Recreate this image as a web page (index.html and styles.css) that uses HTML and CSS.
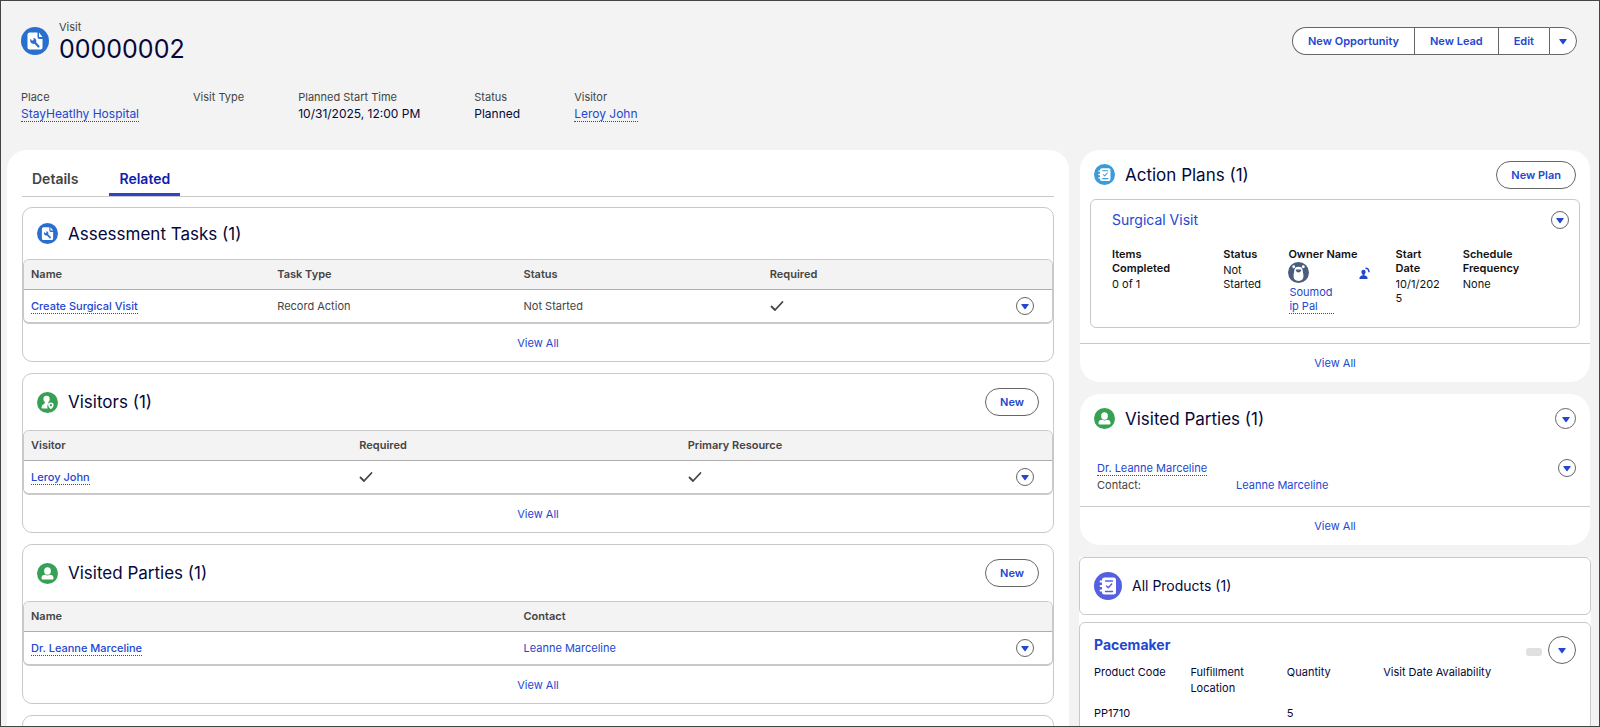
FILE: index.html
```html
<!DOCTYPE html>
<html lang="en">

<head>
    <meta charset="utf-8">
    <title>Visit 00000002</title>
    <link rel="stylesheet" href="styles.css">
</head>

<body>
    <svg class="sprite" aria-hidden="true">
        <symbol id="icon-task" viewBox="0 0 28 28">
            <path fill="#fff" d="M9 5.500h7.500V10q0 2 2 2H21.500v8.500q0 2-2 2h-11q-2 0-2-2v-13q0-2 2.500-2zM18 5.500l3.500 4.500h-3q-.5 0-.5-.5z" />
            <path fill="none" stroke="#2a6fd0" stroke-width="2.200" stroke-linecap="round" d="M13.500 15l4 4.500" />
            <path fill="#2a6fd0" d="M9.500 11.500l1.500 2.300 1.700-.8-.4-2q2.900.2 3 2.800-.1 2.800-2.700 3.100-3-.2-3.400-2.800z" />
        </symbol>
        <symbol id="icon-plan" viewBox="0 0 28 28">
            <rect x="8" y="5.500" width="14" height="17" rx="2.500" fill="#fff" />
            <path stroke="#fff" stroke-width="1.800" stroke-linecap="round" d="M6.500 9.500h2M6.500 14h2M6.500 18.500h2" />
            <path fill="none" stroke="currentColor" stroke-width="1.400" stroke-linecap="round" stroke-linejoin="round" d="M11.500 9h7M11.500 19.500h7M12.500 14l1.800 1.800 3.400-3.800" />
        </symbol>
        <symbol id="icon-person" viewBox="0 0 28 28">
            <ellipse cx="14" cy="10.500" rx="4.500" ry="5" fill="#fff" />
            <path fill="#fff" d="M6 20.500v-.5q0-4.500 5.200-4.500Q14 17.500 16.800 15.500 22 15.500 22 20v.5q0 1.500-1.500 1.500h-13Q6 22 6 20.500z" />
        </symbol>
        <symbol id="icon-visitor" viewBox="0 0 28 28">
            <path fill="#fff" d="M12.500 5q4.500 0 4.500 4.500 0 2-1.500 3.500-.7 1 0 2-1.800 2-1.800 4.500 0 1.500.7 2.500H7.500Q6 22 6 20.500q0-3 3-4.500 2.500-.8 1.200-3Q8.500 11.500 8.500 9.500 8.500 5 12.500 5z" />
            <path fill="#fff" fill-rule="evenodd" d="M18.500 14q3.700 0 3.700 3.500 0 2.300-3.700 5.500-3.700-3.200-3.700-5.500 0-3.500 3.700-3.500zm0 2a1.500 1.500 0 1 0 .01 0z" />
        </symbol>
        <symbol id="icon-check" viewBox="0 0 14 12">
            <path fill="none" stroke="#444" stroke-width="1.800" stroke-linecap="round" stroke-linejoin="round" d="M1.500 6.500l3.500 3.500 7.500-8" />
        </symbol>
        <symbol id="icon-down" viewBox="0 0 8 6">
            <path d="M.8 0h6.400q.9 0 .4.700L4.500 5q-.5.500-1 0L.4.700Q-.1 0 .8 0z" fill="#2347d0" />
        </symbol>
    </svg>

    <div class="page">
        <header class="record-header">
            <div class="record-top">
                <span class="icon icon-large blue"><svg><use href="#icon-task" /></svg></span>
                <div class="record-name">
                    <p class="record-type">Visit</p>
                    <h1>00000002</h1>
                </div>
                <div class="button-group">
                    <button type="button">New Opportunity</button>
                    <button type="button">New Lead</button>
                    <button type="button">Edit</button>
                    <button type="button" class="more" aria-label="More actions"><svg class="caret"><use href="#icon-down" /></svg></button>
                </div>
            </div>
            <dl class="record-fields">
                <div>
                    <dt>Place</dt>
                    <dd><a href="#" class="dotted">StayHeatlhy Hospital</a></dd>
                </div>
                <div>
                    <dt>Visit Type</dt>
                    <dd></dd>
                </div>
                <div>
                    <dt>Planned Start Time</dt>
                    <dd>10/31/2025, 12:00 PM</dd>
                </div>
                <div>
                    <dt>Status</dt>
                    <dd>Planned</dd>
                </div>
                <div>
                    <dt>Visitor</dt>
                    <dd><a href="#" class="dotted">Leroy John</a></dd>
                </div>
            </dl>
        </header>

        <div class="columns">
            <main class="main-panel">
                <nav class="tabs">
                    <a href="#">Details</a>
                    <a href="#" class="active">Related</a>
                </nav>

                <section class="related-list">
                    <div class="list-header short">
                        <span class="icon blue"><svg><use href="#icon-task" /></svg></span>
                        <h2>Assessment Tasks (1)</h2>
                    </div>
                    <div class="table-wrap">
                        <table>
                            <thead>
                                <tr>
                                    <th>Name</th>
                                    <th>Task Type</th>
                                    <th>Status</th>
                                    <th>Required</th>
                                    <th class="action"></th>
                                </tr>
                            </thead>
                            <tbody>
                                <tr>
                                    <td><a href="#" class="dotted strong">Create Surgical Visit</a></td>
                                    <td>Record Action</td>
                                    <td>Not Started</td>
                                    <td><svg class="check"><use href="#icon-check" /></svg></td>
                                    <td class="action"><button type="button" class="menu" aria-label="Show actions"><svg class="caret"><use href="#icon-down" /></svg></button></td>
                                </tr>
                            </tbody>
                        </table>
                    </div>
                    <a href="#" class="view-all">View All</a>
                </section>

                <section class="related-list">
                    <div class="list-header">
                        <span class="icon green"><svg><use href="#icon-visitor" /></svg></span>
                        <h2>Visitors (1)</h2>
                        <button type="button" class="pill">New</button>
                    </div>
                    <div class="table-wrap">
                        <table>
                            <thead>
                                <tr>
                                    <th>Visitor</th>
                                    <th>Required</th>
                                    <th>Primary Resource</th>
                                    <th class="action"></th>
                                </tr>
                            </thead>
                            <tbody>
                                <tr>
                                    <td><a href="#" class="dotted strong">Leroy John</a></td>
                                    <td><svg class="check"><use href="#icon-check" /></svg></td>
                                    <td><svg class="check"><use href="#icon-check" /></svg></td>
                                    <td class="action"><button type="button" class="menu" aria-label="Show actions"><svg class="caret"><use href="#icon-down" /></svg></button></td>
                                </tr>
                            </tbody>
                        </table>
                    </div>
                    <a href="#" class="view-all">View All</a>
                </section>

                <section class="related-list">
                    <div class="list-header">
                        <span class="icon green"><svg><use href="#icon-person" /></svg></span>
                        <h2>Visited Parties (1)</h2>
                        <button type="button" class="pill">New</button>
                    </div>
                    <div class="table-wrap">
                        <table>
                            <thead>
                                <tr>
                                    <th>Name</th>
                                    <th>Contact</th>
                                    <th class="action"></th>
                                </tr>
                            </thead>
                            <tbody>
                                <tr>
                                    <td><a href="#" class="dotted strong">Dr. Leanne Marceline</a></td>
                                    <td><a href="#">Leanne Marceline</a></td>
                                    <td class="action"><button type="button" class="menu" aria-label="Show actions"><svg class="caret"><use href="#icon-down" /></svg></button></td>
                                </tr>
                            </tbody>
                        </table>
                    </div>
                    <a href="#" class="view-all">View All</a>
                </section>

                <section class="related-list">
                    <div class="list-header"></div>
                </section>
            </main>

            <aside class="sidebar">
                <section class="side-card">
                    <div class="side-header">
                        <span class="icon sky"><svg><use href="#icon-plan" /></svg></span>
                        <h2>Action Plans (1)</h2>
                        <button type="button" class="pill">New Plan</button>
                    </div>
                    <div class="plan">
                        <div class="plan-top">
                            <a href="#" class="plan-name">Surgical Visit</a>
                            <button type="button" class="menu" aria-label="Show actions"><svg class="caret"><use href="#icon-down" /></svg></button>
                        </div>
                        <dl class="plan-fields">
                            <div>
                                <dt>Items Completed</dt>
                                <dd>0 of 1</dd>
                            </div>
                            <div>
                                <dt>Status</dt>
                                <dd>Not Started</dd>
                            </div>
                            <div>
                                <dt class="owner-label">Owner Name</dt>
                                <dd class="owner">
                                    <svg class="avatar" viewBox="0 0 22 22">
                                        <circle cx="11" cy="11" r="11" fill="#4b5d7c" />
                                        <circle cx="6" cy="5" r="1.500" fill="#fff" />
                                        <circle cx="16" cy="5" r="1.500" fill="#fff" />
                                        <path fill="#fff" d="M11 5q4 0 4.300 3.500l.9 5.500q.3 5.800-5.200 5.800T5.800 14l.9-5.500Q7 5 11 5z" />
                                        <path fill="#4b5d7c" d="M8.800 7.800h4.400q.6 0 .5.800Q13.300 11 11 11T8.300 8.600q-.1-.8.500-.8z" />
                                    </svg>
                                    <button type="button" class="change-owner" aria-label="Change owner">
                                        <svg viewBox="0 0 12 12">
                                            <circle cx="4.500" cy="5" r="2.200" fill="#2347d0" />
                                            <path fill="#2347d0" d="M3.500 6.500h2v2q3 .5 3 2.500v1H.5v-1q0-2 3-2.500z" />
                                            <path fill="none" stroke="#2347d0" stroke-width="1.500" d="M6.500 1.200q3.500 0 3.500 4" />
                                        </svg>
                                    </button>
                                    <a href="#" class="dotted">Soumodip Pal</a>
                                </dd>
                            </div>
                            <div>
                                <dt>Start Date</dt>
                                <dd>10/1/2025</dd>
                            </div>
                            <div>
                                <dt>Schedule Frequency</dt>
                                <dd>None</dd>
                            </div>
                        </dl>
                    </div>
                    <a href="#" class="view-all">View All</a>
                </section>

                <section class="side-card">
                    <div class="side-header">
                        <span class="icon green"><svg><use href="#icon-person" /></svg></span>
                        <h2>Visited Parties (1)</h2>
                        <button type="button" class="menu medium" aria-label="Show list actions"><svg class="caret"><use href="#icon-down" /></svg></button>
                    </div>
                    <div class="party">
                        <div class="party-name">
                            <a href="#" class="dotted">Dr. Leanne Marceline</a>
                            <p class="party-contact"><span>Contact:</span><a href="#">Leanne Marceline</a></p>
                        </div>
                        <button type="button" class="menu" aria-label="Show actions"><svg class="caret"><use href="#icon-down" /></svg></button>
                    </div>
                    <a href="#" class="view-all">View All</a>
                </section>

                <div class="products">
                    <section class="product-title">
                        <span class="icon icon-large indigo"><svg><use href="#icon-plan" /></svg></span>
                        <h3>All Products (1)</h3>
                    </section>
                    <section class="product">
                        <div class="product-top">
                            <a href="#" class="product-name">Pacemaker</a>
                            <span class="badge"></span>
                            <button type="button" class="menu large" aria-label="Show actions"><svg class="caret"><use href="#icon-down" /></svg></button>
                        </div>
                        <dl class="product-fields">
                            <div>
                                <dt>Product Code</dt>
                                <dd>PP1710</dd>
                            </div>
                            <div>
                                <dt>Fulfillment Location</dt>
                                <dd></dd>
                            </div>
                            <div>
                                <dt>Quantity</dt>
                                <dd>5</dd>
                            </div>
                            <div>
                                <dt>Visit Date Availability</dt>
                                <dd></dd>
                            </div>
                        </dl>
                    </section>
                </div>
            </aside>
        </div>
    </div>
</body>

</html>
```

FILE: styles.css
```css
* {
    box-sizing: border-box;
}

body {
    font-family: Inter, "Liberation Sans", sans-serif;
    font-size: 11px;
    line-height: 14px;
    color: #444;
    margin: 0;
}

h1, h2, h3, p, dl, dd {
    margin: 0;
}

h1, h2, h3 {
    color: #05083a;
    font-weight: 400;
}

a {
    color: #2347d0;
    text-decoration: none;
}

button {
    font-family: inherit;
    cursor: pointer;
}

.sprite {
    display: none;
}

.page {
    height: 100vh;
    overflow: hidden;
    background-color: #f3f3f3;
    border: 1px solid #444;
}

.dotted {
    border-bottom: 1px dotted #2347d0;
}

.strong {
    font-weight: 500;
}

/* icons */
.icon {
    display: flex;
    flex: none;
    width: 21px;
    height: 21px;
    border-radius: 50%;
}

.icon svg {
    width: 100%;
    height: 100%;
}

.icon-large {
    width: 28px;
    height: 28px;
}

.blue {
    background-color: #2a6fd0;
}

.green {
    background-color: #36a155;
}

.sky {
    background-color: #3a9bd8;
    color: #3a9bd8;
}

.indigo {
    background-color: #5560e0;
    color: #5560e0;
}

.caret {
    width: 8px;
    height: 6px;
}

.check {
    display: block;
    width: 14px;
    height: 12px;
}

/* buttons */
.pill {
    height: 28px;
    padding: 0 14px;
    margin-left: auto;
    background-color: #fff;
    border: 1px solid #666;
    border-radius: 14px;
    color: #2347d0;
    font-size: 11px;
    font-weight: 600;
}

.menu {
    display: flex;
    flex: none;
    align-items: center;
    justify-content: center;
    width: 18px;
    height: 18px;
    padding: 2px 0 0;
    background-color: #fff;
    border: 1px solid #666;
    border-radius: 50%;
}

.medium {
    width: 21px;
    height: 21px;
    margin-left: auto;
}

.large {
    width: 28px;
    height: 28px;
}

.button-group {
    display: flex;
    margin-left: auto;
}

.button-group button {
    height: 28px;
    padding: 0 15px;
    background-color: #fff;
    border: 1px solid #666;
    border-right-width: 0;
    color: #2347d0;
    font-size: 11px;
    font-weight: 600;
}

.button-group button:first-child {
    border-radius: 14px 0 0 14px;
}

.button-group .more {
    padding: 0 9px;
    border-right-width: 1px;
    border-radius: 0 14px 14px 0;
}

/* record header */
.record-header {
    height: 149px;
    padding: 18px 22px 0 20px;
}

.record-top {
    display: flex;
    align-items: center;
    gap: 10px;
}

.record-type {
    line-height: 16px;
}

h1 {
    font-size: 25px;
    line-height: 28px;
}

.record-fields {
    display: flex;
    gap: 54px;
    margin-top: 27px;
}

.record-fields dd {
    margin-top: 3px;
    color: #05083a;
    font-size: 12px;
}

/* layout */
.columns {
    display: grid;
    grid-template-columns: minmax(0, 1062fr) minmax(0, 512fr);
    gap: 10px;
    align-items: start;
    padding: 0 8px 0 6px;
}

.main-panel {
    padding: 12px 15px;
    background-color: #fff;
    border-radius: 20px;
}

.tabs {
    display: flex;
    gap: 21px;
    border-bottom: 1px solid #c9c9c9;
    margin-bottom: 10px;
}

.tabs a {
    padding: 9px 10px 6px;
    border-bottom: 3px solid transparent;
    color: #444;
    font-size: 14px;
    font-weight: 600;
    line-height: 16px;
}

.tabs .active {
    border-bottom-color: #2f43c8;
    color: #0f1fb0;
}

/* related lists */
.related-list {
    border: 1px solid #c9c9c9;
    border-radius: 10px;
    margin-bottom: 11px;
}

.list-header {
    display: flex;
    align-items: center;
    gap: 10px;
    height: 56px;
    padding: 0 14px;
}

.short {
    height: 51px;
}

h2 {
    font-size: 17px;
    line-height: 20px;
}

.table-wrap {
    border: 1px solid #c9c9c9;
    border-bottom-width: 2px;
    border-radius: 6px;
    overflow: hidden;
}

table {
    width: 100%;
    border-collapse: collapse;
    table-layout: fixed;
}

th {
    height: 29px;
    padding: 0 7px;
    background-color: #f3f3f3;
    border-bottom: 1px solid #aeaeae;
    font-weight: 600;
    text-align: left;
}

td {
    height: 33px;
    padding: 0 7px;
}

.action {
    width: 43px;
}

.view-all {
    display: block;
    padding: 12px 0 11px;
    text-align: center;
}

/* sidebar */
.side-card {
    background-color: #fff;
    border-radius: 20px;
    margin: 0 1px 12px;
}

.side-header {
    display: flex;
    align-items: center;
    gap: 10px;
    height: 49px;
    padding: 0 14px;
}

.side-card .view-all {
    border-top: 1px solid #c9c9c9;
    padding-bottom: 12px;
}

.plan {
    border: 1px solid #c9c9c9;
    border-radius: 6px;
    margin: 0 10px 15px;
    padding: 11px 10px 13px 21px;
}

.plan-top {
    display: flex;
    align-items: center;
    justify-content: space-between;
    margin-bottom: 18px;
}

.plan-name {
    font-size: 14px;
}

.plan-fields {
    display: grid;
    grid-template-columns: 111fr 65fr 107fr 67fr 106fr;
    color: #111;
}

.plan-fields dt {
    padding-right: 24px;
    font-weight: 600;
}

.plan-fields .owner-label {
    padding-right: 0;
}

.plan-fields dd {
    padding-right: 20px;
    margin-top: 2px;
    overflow-wrap: anywhere;
}

.plan-fields .owner {
    display: flex;
    flex-wrap: wrap;
    align-items: center;
    justify-content: space-between;
    padding-right: 25px;
    margin-top: 1px;
}

.avatar {
    width: 21px;
    height: 21px;
}

.change-owner {
    width: 12px;
    height: 12px;
    padding: 0;
    background: none;
    border: 0;
}

.change-owner svg {
    display: block;
}

.owner .dotted {
    width: 45px;
    margin: 2px 30px 0 1px;
    word-break: break-all;
}

.party {
    display: flex;
    align-items: start;
    justify-content: space-between;
    padding: 16px 14px 14px;
}

.party-name {
    padding: 2px 3px 0;
}

.party-contact {
    display: flex;
    margin-top: 3px;
}

.party-contact span {
    width: 139px;
}

.products {
    background-color: #fff;
}

.product-title, .product {
    border: 1px solid #c9c9c9;
    border-radius: 6px;
}

.product-title {
    display: flex;
    align-items: center;
    gap: 10px;
    height: 58px;
    padding: 0 14px;
    margin-bottom: 7px;
}

h3 {
    font-size: 14px;
}

.product {
    padding: 13px 14px;
}

.product-top {
    display: flex;
    align-items: center;
    gap: 6px;
}

.product-name {
    align-self: start;
    padding-top: 2px;
    margin-right: auto;
    font-size: 14px;
    font-weight: 700;
}

.badge {
    width: 16px;
    height: 8px;
    margin-top: 4px;
    background-color: #e0e0e0;
    border-radius: 3px;
}

.product-fields {
    display: grid;
    grid-template-columns: 1fr 1fr 1fr 2fr;
    line-height: 16px;
    color: #05083a;
}

.product-fields dt {
    height: 32px;
    padding-right: 10px;
}

.product-fields dd {
    margin-top: 9px;
}
```
